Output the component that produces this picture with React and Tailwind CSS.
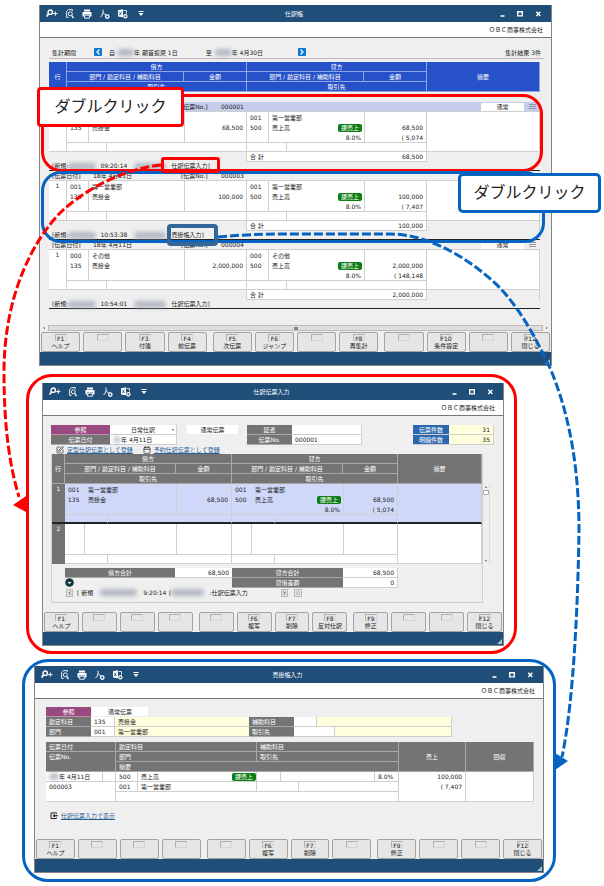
import { ChevronLeft, ChevronRight, Calendar, SquarePen } from 'lucide-react'

const listKeys = ['ヘルプ', '', '付箋', '前伝票', '次伝票', 'ジャンプ', '', '再集計', '', '条件設定', '', '閉じる']
const slipKeys = ['ヘルプ', '', '', '', '', '複写', '削除', '反対仕訳', '修正', '', '', '閉じる']
const ledgerKeys = ['ヘルプ', '', '', '', '', '複写', '削除', '', '修正', '', '', '閉じる']

const vouchers = [
  { no: '000001', dept: ['001', '第一営業部'], amount: '68,500', tax: '( 5,074', time: '09:20:14', source: '仕訳伝票入力', active: true },
  { no: '000003', dept: ['001', '第一営業部'], amount: '100,000', tax: '( 7,407', time: '10:53:38', source: '売掛帳入力' },
  { no: '000004', dept: ['000', 'その他'], amount: '2,000,000', tax: '( 148,148', time: '10:54:01', source: '仕訳伝票入力' },
]

function Smudge({ className }) {
  return <span aria-hidden="true" className={`inline-block h-[7px] shrink-0 rounded-sm bg-gray-400/70 blur-[2px] ${className}`} />
}

function ToolIcons() {
  return (
    <div className="flex items-center gap-2 text-white">
      <button type="button" aria-label="検索追加">
        <svg width="12" height="9" viewBox="0 0 12 9" fill="none" stroke="currentColor">
          <circle cx="4.2" cy="3.2" r="2.2" strokeWidth="1.4" />
          <path d="M2.6 4.8 L0.6 7.6" strokeWidth="1.7" />
          <path d="M7.2 4.6h4.2M9.3 2.5v4.2" />
        </svg>
      </button>
      <button type="button" aria-label="プレビュー">
        <svg width="8" height="10" viewBox="0 0 8 10" fill="none" stroke="currentColor" strokeWidth="0.9">
          <path d="M6.4 2V0.6H2.4L0.6 2.4v6h2" />
          <circle cx="4.3" cy="4.8" r="2" />
          <path d="M5.6 6.4 L7.5 9.2" strokeWidth="1.3" />
        </svg>
      </button>
      <button type="button" aria-label="印刷">
        <svg width="10" height="10" viewBox="0 0 10 10" fill="currentColor">
          <path d="M2 0.5h6v2H2zM0.5 3h9v4.5H8V5.6H2v1.9H0.5z" />
          <path d="M2.6 6.2h4.8v3H2.6z" fill="none" stroke="currentColor" strokeWidth="0.9" />
        </svg>
      </button>
      <button type="button" aria-label="PDF">
        <svg width="10" height="10" viewBox="0 0 10 10" fill="none" stroke="currentColor">
          <path d="M2.8 0.6C3.8 3 2.8 6 0.6 8M3 3.5C4 5 5 5.6 6.4 5.6" />
          <circle cx="7.3" cy="7.6" r="1.7" strokeWidth="1.3" />
        </svg>
      </button>
      <button type="button" aria-label="Excel">
        <svg width="10" height="10" viewBox="0 0 10 10" fill="none" stroke="currentColor">
          <path d="M0 1.2 5 0.3v8L0 7.4z" fill="currentColor" stroke="none" />
          <path d="M1.3 2.8 3.4 6M3.4 2.8 1.3 6" stroke="#1f4e79" strokeWidth="0.8" />
          <path d="M5.5 1.5h3v3" strokeWidth="0.8" />
          <circle cx="7.4" cy="7.3" r="1.6" strokeWidth="1.2" />
        </svg>
      </button>
      <button type="button" aria-label="メニュー" className="pl-[2px]">
        <svg width="6" height="6" viewBox="0 0 6 6" fill="currentColor">
          <path d="M0.5 0h5v1h-5zM0.5 2h5L3 5z" />
        </svg>
      </button>
    </div>
  )
}

function WindowControls() {
  return (
    <svg className="justify-self-end text-white" width="42" height="8" viewBox="0 0 42 8" fill="none" stroke="currentColor" strokeWidth="1.4">
      <path d="M0.5 6h4M17.7 1.7h4.6v4.2h-4.6zM36.3 1.8l4 4.2M40.3 1.8l-4 4.2" />
    </svg>
  )
}

function FunctionBar({ items }) {
  return (
    <div className="flex gap-[3px] px-px">
      {items.map((label, i) => (
        <button
          key={i}
          type="button"
          aria-label={label ? undefined : `F${i + 1}`}
          className={`flex h-5 min-w-0 flex-1 flex-col items-center rounded-[2px] border border-[#a3a3a3] bg-[#e6e6e6] pt-px ${
            i === 4 || i === 8 ? 'ml-[3px]' : ''
          }`}
        >
          <span className="flex h-[7px] w-3 justify-center border border-t-[#b0b0b0] border-r-[#d6d6d6] border-b-[#d6d6d6] border-l-[#b0b0b0] leading-[7px]">
            {label && `F${i + 1}`}
          </span>
          <span className="leading-[10px] whitespace-nowrap">{label}</span>
        </button>
      ))}
    </div>
  )
}

function AppWindow({ title, keys, children }) {
  return (
    <section className="border-x border-b border-[#858585] bg-[#efefef]">
      <header className="grid h-[17px] grid-cols-[1fr_auto_1fr] items-center bg-[#1f4e79] pr-[9px] pl-[6px]">
        <ToolIcons />
        <h2 className="text-white">{title}</h2>
        <WindowControls />
      </header>
      <div className="h-4 border-b border-[#777] bg-white pr-2 text-right leading-[15px]">ＯＢＣ商事株式会社</div>
      {children}
      <FunctionBar items={keys} />
      <footer className="flex h-[13px] items-end justify-end bg-[#1f4e79]">
        <svg width="7" height="7" viewBox="0 0 7 7">
          <path d="M6 1v5H1z" fill="#a9bfd4" />
        </svg>
      </footer>
    </section>
  )
}

function JournalHead({ blue }) {
  const th = `h-[10px] border-r border-b p-0 font-normal leading-[9px] text-white ${
    blue ? 'border-[#8fa6e6] bg-[#2751c8]' : 'border-[#a8a8a8] bg-[#747474]'
  }`
  return (
    <thead>
      <tr>
        <th rowSpan={3} className={th}>行</th>
        <th colSpan={4} className={th}>借方</th>
        <th colSpan={4} className={th}>貸方</th>
        <th rowSpan={3} className={th}>摘要</th>
      </tr>
      <tr>
        <th colSpan={3} className={th}>部門 / 勘定科目 / 補助科目</th>
        <th className={th}>金額</th>
        <th colSpan={3} className={th}>部門 / 勘定科目 / 補助科目</th>
        <th className={th}>金額</th>
      </tr>
      <tr>
        <th colSpan={4} className={th}>取引先</th>
        <th colSpan={4} className={th}>取引先</th>
      </tr>
    </thead>
  )
}

function TaxChip() {
  return <span className="inline-block h-2 rounded-[2px] bg-[#0b7d12] px-[3px] leading-[8px] text-white">課売上</span>
}

// Three text lines and the partner line of one entry.
// covered: a label lies over the left of the first line, so it stays empty.
function EntryRows({ no, entry, noClass, bg, codeLine, endLine, covered }) {
  const td = `h-[10px] border-[#cfcfcf] p-0 leading-[9px] whitespace-nowrap ${bg}`
  const code = `${td} pl-[3px] ${codeLine ? 'border-r' : ''}`
  const name = `${td} pl-[3px]`
  const amount = `${td} border-x pr-[3px] text-right`
  const sub = `${td} border-t border-r ${endLine}`
  const [dept, deptName] = entry?.dept || []
  return (
    <>
      <tr>
        <td rowSpan={4} className={`p-0 text-center align-top leading-[9px] ${noClass}`}>{!covered && no}</td>
        <td className={code}>{!covered && dept}</td>
        <td colSpan={2} className={name}>{!covered && deptName}</td>
        <td className={amount} />
        <td className={code}>{dept}</td>
        <td colSpan={2} className={name}>{deptName}</td>
        <td className={amount} />
        <td rowSpan={4} className={`border-r border-[#cfcfcf] ${bg} ${endLine}`} />
      </tr>
      <tr>
        <td className={code}>{entry && '135'}</td>
        <td colSpan={2} className={name}>{entry && '売掛金'}</td>
        <td className={amount}>{entry?.amount}</td>
        <td className={code}>{entry && '500'}</td>
        <td className={name}>{entry && '売上高'}</td>
        <td className={`${td} pr-[2px] text-right`}>{entry && <TaxChip />}</td>
        <td className={amount}>{entry?.amount}</td>
      </tr>
      <tr>
        <td className={code} />
        <td colSpan={2} className={name} />
        <td className={amount} />
        <td className={code} />
        <td colSpan={2} className={`${td} pr-[3px] text-right`}>{entry && '8.0%'}</td>
        <td className={amount}>{entry?.tax}</td>
      </tr>
      <tr>
        <td colSpan={2} className={sub} />
        <td colSpan={2} className={sub} />
        <td colSpan={2} className={sub} />
        <td colSpan={2} className={sub} />
      </tr>
    </>
  )
}

function Voucher({ voucher }) {
  return (
    <tbody>
      <tr>
        <td colSpan={10} className={`h-[10px] border-b border-[#cfcfcf] p-0 ${voucher.active ? 'bg-[#c5cdec]' : ''}`}>
          <div className="flex h-[9px] items-center pr-1 pl-[3px] leading-[9px]">
            <span className="w-[41px]">{!voucher.active && '[伝票日付]'}</span>
            <span className="w-[88px]">{!voucher.active && '18年 4月11日'}</span>
            <span className="w-10">[伝票No.]</span>
            <span>{voucher.no}</span>
            <span className="ml-auto h-2 w-[43px] bg-white text-center leading-[8px]">通常</span>
            <svg className="ml-[5px]" width="7" height="7" viewBox="0 0 7 7" stroke="#777">
              <path d="M0 1.5h7M0 3.5h7M0 5.5h7" strokeWidth="0.7" />
            </svg>
          </div>
        </td>
      </tr>
      <EntryRows
        no="1"
        entry={voucher}
        noClass="bg-white border-r border-b border-[#cfcfcf]"
        bg="bg-white"
        codeLine
        endLine="border-b"
        covered={voucher.active}
      />
      <tr>
        <td colSpan={5} className="h-[10px] border-r border-[#cfcfcf] p-0" />
        <td colSpan={3} className="border-b border-[#cfcfcf] bg-white p-0 pl-[3px] leading-[9px]">合 計</td>
        <td className="border-r border-b border-[#cfcfcf] bg-white p-0 pr-[3px] text-right leading-[9px]">{voucher.amount}</td>
        <td className="border-r border-[#cfcfcf]" />
      </tr>
      <tr>
        <td colSpan={10} className="h-[9px] border-b border-[#222] p-0">
          <div className="flex h-2 items-center pl-[3px] leading-[8px]">
            <span>[新規:</span>
            <Smudge className="w-[28px]" />
            <span className="ml-[4px] w-[34px]">{voucher.time}</span>
            <Smudge className="w-[32px]" />
            <span className="ml-[5px]">{voucher.source}]</span>
          </div>
        </td>
      </tr>
    </tbody>
  )
}

function JournalListWindow() {
  return (
    <AppWindow title="仕訳帳" keys={listKeys}>
      <div className="pt-2 pr-[7px] pl-[9px]">
        <div className="flex h-[13px] items-center border-b border-[#bbb] pr-[3px] pl-[3px] whitespace-nowrap">
          <span className="w-[42px]">集計期間</span>
          <button type="button" aria-label="前の期間" className="flex h-2 w-2 items-center justify-center rounded-[1px] bg-[#0a78d0] text-white">
            <ChevronLeft className="h-2 w-2" strokeWidth={4} />
          </button>
          <span className="ml-[7px]">自</span>
          <Smudge className="ml-[2px] w-[17px]" />
          <span>年 期首振戻 1日</span>
          <span className="ml-7">至</span>
          <Smudge className="ml-[3px] w-[17px]" />
          <span>年 4月30日</span>
          <button type="button" aria-label="次の期間" className="ml-[35px] flex h-2 w-2 items-center justify-center rounded-[1px] bg-[#0a78d0] text-white">
            <ChevronRight className="h-2 w-2" strokeWidth={4} />
          </button>
          <span className="ml-auto">集計結果 3件</span>
        </div>
      </div>
      <div className="pt-[3px] pr-[11px] pb-4 pl-[9px]">
        <table className="w-full table-fixed border-separate border-spacing-0">
          <colgroup>
            <col className="w-[18px]" />
            <col className="w-[22px]" />
            <col className="w-[18px]" />
            <col className="w-[77px]" />
            <col className="w-[63px]" />
            <col className="w-[22px]" />
            <col className="w-[18px]" />
            <col className="w-[77px]" />
            <col className="w-[63px]" />
            <col />
          </colgroup>
          <JournalHead blue />
          <tbody>
            <tr>
              <td colSpan={10} className="h-[10px] p-0" />
            </tr>
          </tbody>
          {vouchers.map((voucher) => (
            <Voucher key={voucher.no} voucher={voucher} />
          ))}
        </table>
      </div>
      <div className="flex h-[7px] items-center gap-[3px] px-[3px] pb-px">
        <span className="h-0 w-0 border-y-[1px] border-r-[2px] border-y-transparent border-r-[#666]" />
        <span className="flex h-[6px] flex-1 items-center justify-center border border-[#bbb] bg-[#dedede]">
          <span className="h-[3px] w-1 bg-[#888]" />
        </span>
        <span className="h-0 w-0 border-y-[1px] border-l-[2px] border-y-transparent border-l-[#666]" />
      </div>
    </AppWindow>
  )
}

const grayLabel = 'block h-[10px] border-b border-[#a8a8a8] bg-[#747474] text-center leading-[9px] text-white'
const field = 'block h-[10px] w-full min-w-0 border-r border-b border-[#cfcfcf] bg-white p-0 leading-[9px] outline-none'

function SlipWindow() {
  return (
    <AppWindow title="仕訳伝票入力" keys={slipKeys}>
      <div className="pt-[9px] pr-[9px] pb-[9px] pl-2">
        <div className="flex items-start">
          <div className="grid grid-cols-[59px_67px]">
            <button type="button" className="h-[10px] border-b border-[#c08fb0] bg-[#984a80] leading-[9px] text-white">参照</button>
            <div className="relative">
              <select aria-label="伝票区分" className={`${field} appearance-none text-center`}>
                <option>日常仕訳</option>
              </select>
              <span className="pointer-events-none absolute top-1 right-[3px] h-0 w-0 border-x-[1px] border-t-[2px] border-x-transparent border-t-[#555]" />
            </div>
            <label htmlFor="slip-date" className={grayLabel}>伝票日付</label>
            <div className="relative">
              <input id="slip-date" defaultValue="年 4月11日" className={`${field} pl-[11px]`} />
              <Smudge className="absolute top-px left-1 w-[6px]" />
            </div>
          </div>
          <span className="ml-[10px] h-[9px] w-[51px] bg-white text-center leading-[9px]">通常伝票</span>
          <div className="ml-[9px] grid grid-cols-[45px_70px]">
            <label htmlFor="slip-proof" className={grayLabel}>証憑</label>
            <input id="slip-proof" className={field} />
            <label htmlFor="slip-no" className={grayLabel}>伝票No.</label>
            <input id="slip-no" defaultValue="000001" className={`${field} pl-[3px]`} />
          </div>
          <div className="ml-auto grid grid-cols-[36px_45px] leading-[9px]">
            <span className="h-[10px] border-b border-[#cfcfcf] bg-[#2b67ad] text-center text-white">伝票件数</span>
            <span className="h-[10px] border-r border-b border-[#cfcfcf] bg-[#ffffdd] pr-[3px] text-right">31</span>
            <span className="h-[10px] border-b border-[#cfcfcf] bg-[#2b67ad] text-center text-white">明細件数</span>
            <span className="h-[10px] border-r border-b border-[#cfcfcf] bg-[#ffffdd] pr-[3px] text-right">35</span>
          </div>
        </div>
        <div className="flex h-[9px] items-center gap-[3px] pl-[5px] leading-[9px]">
          <SquarePen className="h-2 w-2" />
          <a href="#template" className="text-[#2a6098] underline">定型仕訳伝票として登録</a>
          <Calendar className="ml-[7px] h-2 w-2" />
          <a href="#reserve" className="text-[#2a6098] underline">予約仕訳伝票として登録</a>
        </div>

        <div className="flex pr-1">
          <div className="min-w-0 flex-1 border-r border-b border-l border-[#cfcfcf] pb-[5px]">
            <table className="w-full table-fixed border-separate border-spacing-0">
              <colgroup>
                <col className="w-[13px]" />
                <col className="w-[20px]" />
                <col className="w-[23px]" />
                <col className="w-[68px]" />
                <col className="w-[56px]" />
                <col className="w-[20px]" />
                <col className="w-[23px]" />
                <col className="w-[68px]" />
                <col className="w-[55px]" />
                <col />
              </colgroup>
              <JournalHead />
              <tbody>
                <EntryRows no="1" entry={vouchers[0]} noClass="border-b-2 border-[#222] bg-[#747474] text-white" bg="bg-[#cfd8f8]" endLine="border-b-2 border-b-[#222]" />
                <EntryRows no="2" noClass="bg-[#747474] text-white" bg="bg-white" codeLine endLine="border-b" />
              </tbody>
            </table>
            <div className="mt-1 ml-[13px] grid grid-cols-[110px_57px_111px_55px]">
              <span className={grayLabel}>借方合計</span>
              <span className="h-[10px] border-b border-[#cfcfcf] bg-white pr-[3px] text-right leading-[9px]">68,500</span>
              <span className={grayLabel}>貸方合計</span>
              <span className="h-[10px] border-r border-b border-[#cfcfcf] bg-white pr-[3px] text-right leading-[9px]">68,500</span>
              <button type="button" aria-label="展開" className="h-[9px] w-[9px]">
                <svg width="9" height="9" viewBox="0 0 9 9">
                  <circle cx="4.5" cy="4.5" r="4.3" fill="#12383f" />
                  <path d="M2.5 4h4L4.5 6z" fill="#fff" />
                </svg>
              </button>
              <span />
              <span className={grayLabel}>貸借差額</span>
              <span className="h-[10px] border-r border-b border-[#cfcfcf] bg-white pr-[3px] text-right leading-[9px]">0</span>
            </div>
            <div className="ml-[14px] flex h-[9px] items-center leading-[9px] whitespace-nowrap">
              <button type="button" aria-label="前の履歴" className="flex h-2 w-[7px] items-center justify-center border border-[#bbb] bg-[#ddd]">
                <ChevronLeft className="h-[6px] w-[6px]" strokeWidth={3} />
              </button>
              <span className="ml-1">[ 新規</span>
              <Smudge className="ml-[7px] w-[37px]" />
              <span className="ml-[6px]">9:20:14 ]</span>
              <Smudge className="w-[33px]" />
              <span className="ml-[6px]">:仕訳伝票入力</span>
              <button type="button" aria-label="次の履歴" className="ml-[33px] flex h-2 w-[7px] items-center justify-center border border-[#bbb] bg-[#ddd]">
                <ChevronRight className="h-[6px] w-[6px]" strokeWidth={3} />
              </button>
              <button type="button" aria-label="履歴" className="ml-[6px] flex h-2 w-2 items-center justify-center border border-[#bbb] bg-[#e4e4e4]">
                <span className="h-1 w-1 rounded-full border border-[#bbb]" />
              </button>
            </div>
          </div>
          <div className="mt-[30px] flex h-20 w-[7px] flex-col items-center border-r border-[#ddd] pt-[2px] pb-[2px]">
            <span className="h-0 w-0 border-x-[1px] border-b-[2px] border-x-transparent border-b-[#666]" />
            <span className="mt-[2px] h-[5px] w-[6px] rounded-[1px] border border-[#aaa] bg-white" />
            <span className="mt-auto h-0 w-0 border-x-[1px] border-t-[2px] border-x-transparent border-t-[#666]" />
          </div>
        </div>
      </div>
    </AppWindow>
  )
}

function LedgerWindow() {
  const head = 'h-[10px] border-r border-b border-[#a8a8a8] bg-[#747474] p-0 font-normal leading-[9px] text-white'
  const th = `${head} pl-[3px] text-left`
  const td = 'h-[10px] border-r border-b border-[#cfcfcf] bg-white p-0 pl-[3px] leading-[9px] whitespace-nowrap'
  const leftLabel = 'block h-[10px] border-b border-[#a8a8a8] bg-[#747474] pl-[3px] leading-[9px] text-white'
  return (
    <AppWindow title="売掛帳入力" keys={ledgerKeys}>
      <div className="pt-2 pr-[9px] pb-[19px] pl-[11px]">
        <div className="flex">
          <button type="button" className="h-[10px] w-[45px] border-b border-[#c08fb0] bg-[#984a80] leading-[9px] text-white">参照</button>
          <span className="ml-px h-[9px] w-[56px] bg-white text-center leading-[9px]">通常伝票</span>
        </div>
        <div className="mr-[82px] grid grid-cols-[45px_24px_134px_45px_1fr]">
          <label htmlFor="account" className={leftLabel}>勘定科目</label>
          <input id="account" defaultValue="135" className={`${field} pl-[3px]`} />
          <input aria-label="勘定科目名" defaultValue="売掛金" className="h-[10px] border-b border-[#cfcfcf] bg-[#ffffdd] pl-[3px] leading-[9px]" />
          <label htmlFor="sub-account" className={leftLabel}>補助科目</label>
          <div className="flex">
            <div className="w-[23px] shrink-0">
              <input id="sub-account" className={field} />
            </div>
            <div className="h-[10px] flex-1 border-r border-b border-[#cfcfcf] bg-[#ffffdd]" />
          </div>
          <label htmlFor="dept" className={leftLabel}>部門</label>
          <input id="dept" defaultValue="001" className={`${field} pl-[3px]`} />
          <input aria-label="部門名" defaultValue="第一営業部" className="h-[10px] border-b border-[#cfcfcf] bg-[#ffffdd] pl-[3px] leading-[9px]" />
          <label htmlFor="partner" className={leftLabel}>取引先</label>
          <div className="flex">
            <div className="w-[41px] shrink-0">
              <input id="partner" className={field} />
            </div>
            <div className="h-[10px] flex-1 border-r border-b border-[#cfcfcf] bg-[#ffffdd]" />
          </div>
        </div>

        <table className="mt-[5px] w-full table-fixed border-separate border-spacing-0">
          <colgroup>
            <col className="w-[57px]" />
            <col className="w-[13px]" />
            <col className="w-[22px]" />
            <col className="w-[94px]" />
            <col className="w-[25px]" />
            <col className="w-[24px]" />
            <col className="w-[18px]" />
            <col className="w-[76px]" />
            <col className="w-[24px]" />
            <col className="w-[67px]" />
            <col />
          </colgroup>
          <thead>
            <tr>
              <th colSpan={2} className={th}>伝票日付</th>
              <th colSpan={3} className={th}>勘定科目</th>
              <th colSpan={4} className={th}>補助科目</th>
              <th rowSpan={3} className={head}>売上</th>
              <th rowSpan={3} className={head}>回収</th>
            </tr>
            <tr>
              <th colSpan={2} rowSpan={2} className={`${th} align-top`}>伝票No.</th>
              <th colSpan={3} className={th}>部門</th>
              <th colSpan={4} className={th}>取引先</th>
            </tr>
            <tr>
              <th colSpan={7} className={th}>摘要</th>
            </tr>
          </thead>
          <tbody>
            <tr>
              <td className={td}>
                <div className="flex items-center">
                  <Smudge className="w-[10px]" />年 4月11日
                </div>
              </td>
              <td className={td} />
              <td className={td}>500</td>
              <td className="border-b border-[#cfcfcf] bg-white p-0 pl-[3px] leading-[9px]">売上高</td>
              <td className="border-r border-b border-[#cfcfcf] bg-white p-0 text-center leading-[9px]"><TaxChip /></td>
              <td className={td} />
              <td colSpan={2} className={td} />
              <td className={td}>8.0%</td>
              <td rowSpan={3} className="border-r border-b border-[#cfcfcf] bg-white p-0 pr-[3px] text-right align-top leading-[10px]">
                100,000<br />( 7,407
              </td>
              <td rowSpan={3} className={td} />
            </tr>
            <tr>
              <td colSpan={2} rowSpan={2} className={`${td} align-top`}>000003</td>
              <td className={td}>001</td>
              <td colSpan={2} className={td}>第一営業部</td>
              <td colSpan={2} className={td} />
              <td colSpan={2} className={td} />
            </tr>
            <tr>
              <td colSpan={7} className={td} />
            </tr>
          </tbody>
        </table>
        <div className="mt-[9px] flex h-[9px] items-center gap-[3px] pl-1">
          <svg width="8" height="8" viewBox="0 0 8 8" fill="none" stroke="#222">
            <path d="M6.5 1.8V0.9H1v5.6h5.5V5.6" />
            <path d="M3 3.7h4.8" strokeWidth="1.2" />
            <path d="M5 1.8v3.8L2.6 3.7z" fill="#222" stroke="none" />
          </svg>
          <a href="#slip" className="text-[#2a6098] underline">仕訳伝票入力で表示</a>
        </div>
      </div>
    </AppWindow>
  )
}

function Annotations() {
  return (
    <div className="pointer-events-none">
      <div className="absolute top-[94px] left-[41px] h-[78px] w-[502px] rounded-[20px] border-[3px] border-[#fe0000]" />
      <div className="absolute top-[171px] left-[41px] h-[72px] w-[504px] rounded-[20px] border-[3px] border-[#0563c1]" />
      <svg className="absolute top-0 left-0" width="604" height="886" viewBox="0 0 604 886" fill="none">
        <path d="M161 165C130 168 92 184 62 211C30 243 4 300 4 372C4 420 8 460 19 497" stroke="#fe0000" strokeWidth="3" strokeDasharray="9 3" />
        <path d="M13 505 26 496V512Z" fill="#fe0000" />
        <path
          d="M218 237C250 234 270 234 300 234H390C430 234 472 260 500 288C520 309 536 338 550 368C570 415 579 470 579 530C578 600 574 700 562 757"
          stroke="#0563c1"
          strokeWidth="3"
          strokeDasharray="9 3"
        />
        <path d="M555 753 568 761 555 770Z" fill="#0563c1" />
      </svg>
      <div className="absolute top-[157px] left-[161px] h-4 w-[59px] rounded-[3px] border-[3px] border-[#fe0000]" />
      <div className="absolute top-[224px] left-[167px] h-[22px] w-[51px] rounded-[4px] border-4 border-[#336699]" />
      <div className="absolute top-[87px] left-[37px] flex h-10 w-[147px] items-center justify-center rounded-[4px] border-[3px] border-[#fe0000] bg-white text-base">
        ダブルクリック
      </div>
      <div className="absolute top-[173px] left-[458px] flex h-10 w-[143px] items-center justify-center rounded-[5px] border-[3px] border-[#0563c1] bg-white text-base">
        ダブルクリック
      </div>
    </div>
  )
}

export default function App() {
  return (
    <main className="relative bg-white pt-[5px] pb-1 font-['DejaVu_Sans','Noto_Sans_CJK_JP',sans-serif] text-[6px] leading-[9px] text-[#222]">
      <div className="mr-[52px] ml-[39px]">
        <JournalListWindow />
      </div>
      <div className="mt-2 mr-[87px] ml-[26px] rounded-[26px] border-[3px] border-[#fe0000] pt-[6px] pr-[10px] pb-[5px] pl-[13px]">
        <SlipWindow />
      </div>
      <div className="mt-[5px] mr-[48px] ml-[22px] rounded-[26px] border-[3px] border-[#0563c1] pt-1 pr-[9px] pb-[6px] pl-[9px]">
        <LedgerWindow />
      </div>
      <Annotations />
    </main>
  )
}
